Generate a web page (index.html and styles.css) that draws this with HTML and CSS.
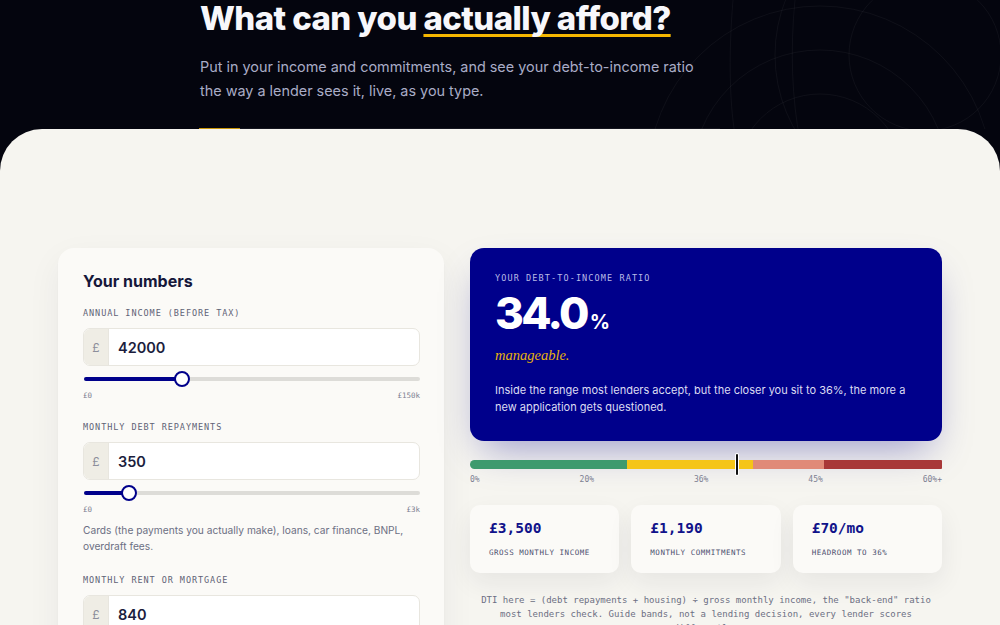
FILE: index.html
```html
<!DOCTYPE html>
<html lang="en">
<head>
<meta charset="utf-8">
<title>What can you actually afford?</title>
<link rel="stylesheet" href="styles.css">
</head>
<body>
<header class="hero">
  <svg class="hero-decor" width="1000" height="140" viewBox="0 0 1000 140" aria-hidden="true">
    <g fill="none" stroke="rgba(255,255,255,0.045)" stroke-width="1">
      <circle cx="820" cy="178" r="172"/>
      <circle cx="820" cy="178" r="128"/>
      <circle cx="820" cy="178" r="84"/>
      <circle cx="925" cy="55" r="76"/>
      <circle cx="925" cy="55" r="150"/>
      <path d="M733 0 C 728 60 730 110 736 140"/>
      <path d="M795 0 C 790 50 792 100 800 140"/>
    </g>
  </svg>
  <div class="hero-inner">
    <h1 class="hero-title">What can you <span class="hero-underline">actually afford?</span></h1>
    <p class="hero-lede">Put in your income and commitments, and see your debt-to-income ratio the way a lender sees it, live, as you type.</p>
    <div class="hero-rule"><span class="hero-rule-accent"></span></div>
  </div>
</header>

<main class="sheet">
  <div class="calc">
    <section class="inputs-card">
      <h2 class="card-title">Your numbers</h2>

      <div class="field">
        <label class="field-label" for="income">ANNUAL INCOME (BEFORE TAX)</label>
        <div class="field-input">
          <span class="field-prefix">£</span>
          <input id="income" class="field-value" type="text" value="42000">
        </div>
        <div class="slider" style="--p:0.28">
          <div class="slider-fill"></div>
          <div class="slider-thumb"></div>
        </div>
        <div class="slider-range"><span>£0</span><span>£150k</span></div>
      </div>

      <div class="field">
        <label class="field-label" for="debt">MONTHLY DEBT REPAYMENTS</label>
        <div class="field-input">
          <span class="field-prefix">£</span>
          <input id="debt" class="field-value" type="text" value="350">
        </div>
        <div class="slider" style="--p:0.1167">
          <div class="slider-fill"></div>
          <div class="slider-thumb"></div>
        </div>
        <div class="slider-range"><span>£0</span><span>£3k</span></div>
        <p class="field-help">Cards (the payments you actually make), loans, car finance, BNPL, overdraft fees.</p>
      </div>

      <div class="field">
        <label class="field-label" for="rent">MONTHLY RENT OR MORTGAGE</label>
        <div class="field-input">
          <span class="field-prefix">£</span>
          <input id="rent" class="field-value" type="text" value="840">
        </div>
      </div>
    </section>

    <section class="results">
      <div class="dti-card">
        <div class="dti-label">YOUR DEBT-TO-INCOME RATIO</div>
        <div class="dti-value">34.0<span class="dti-pct">%</span></div>
        <div class="dti-verdict">manageable.</div>
        <p class="dti-text">Inside the range most lenders accept, but the closer you sit to 36%, the more a new application gets questioned.</p>
      </div>

      <div class="gauge">
        <div class="gauge-bar">
          <span class="band band-green"></span>
          <span class="band band-yellow"></span>
          <span class="band band-salmon"></span>
          <span class="band band-red"></span>
        </div>
        <span class="gauge-marker" style="left:56.67%"></span>
      </div>
      <div class="gauge-scale"><span>0%</span><span>20%</span><span>36%</span><span>45%</span><span>60%+</span></div>

      <div class="stats">
        <div class="stat">
          <div class="stat-value">£3,500</div>
          <div class="stat-label">GROSS MONTHLY INCOME</div>
        </div>
        <div class="stat">
          <div class="stat-value">£1,190</div>
          <div class="stat-label">MONTHLY COMMITMENTS</div>
        </div>
        <div class="stat">
          <div class="stat-value">£70/mo</div>
          <div class="stat-label">HEADROOM TO 36%</div>
        </div>
      </div>

      <p class="footnote">DTI here = (debt repayments + housing) ÷ gross monthly income, the "back-end" ratio most lenders check. Guide bands, not a lending decision, every lender scores differently.</p>
    </section>
  </div>
</main>
</body>
</html>
```

FILE: styles.css
```css
* { box-sizing: border-box; }

html, body {
  margin: 0;
  padding: 0;
}

body {
  background: #04050e;
  font-family: Inter, "Noto Sans", sans-serif;
  color: #1b1d3d;
  overflow: hidden;
}

/* ---------- hero ---------- */
.hero {
  position: relative;
  height: 129px;
  overflow: hidden;
}

.hero-decor {
  position: absolute;
  left: 0;
  top: 0;
}

.hero-inner {
  position: relative;
  width: 602px;
  margin: 0 auto;
  padding-left: 1px;
}

.hero-title {
  margin: 0;
  font-size: 33px;
  line-height: 36px;
  font-weight: 800;
  letter-spacing: -0.018em;
  color: #f7f7fb;
}

.hero-underline {
  text-decoration: underline;
  text-decoration-color: #f5b700;
  text-decoration-thickness: 3px;
  text-underline-offset: 4px;
  text-decoration-skip-ink: none;
}

.hero-lede {
  margin: 19px 0 0;
  font-size: 14.4px;
  line-height: 24px;
  color: #a9acc6;
  width: 510px;
}

.hero-rule {
  margin-top: 25px;
  height: 2px;
  width: 520px;
  border-top: 1px solid rgba(255, 255, 255, 0.07);
  position: relative;
}

.hero-rule-accent {
  position: absolute;
  left: -1px;
  top: -1px;
  width: 41px;
  height: 2px;
  background: #c9960a;
}

/* ---------- sheet ---------- */
.sheet {
  background: #f6f5f0;
  border-radius: 42px 42px 0 0;
  padding-top: 119px;
  min-height: 496px;
}

.calc {
  width: 884px;
  margin: 0 auto;
  display: grid;
  grid-template-columns: 386px 472px;
  column-gap: 26px;
  align-items: start;
}

/* ---------- inputs card ---------- */
.inputs-card {
  background: #fbfaf7;
  border-radius: 16px;
  padding: 23px 24px 24px 25px;
  box-shadow: 0 12px 34px rgba(30, 30, 60, 0.06), 0 1px 2px rgba(30, 30, 60, 0.03);
}

.card-title {
  margin: 0;
  font-size: 16px;
  line-height: 20px;
  font-weight: 700;
  color: #15173a;
}

.field {
  margin-top: 20px;
}

.card-title + .field {
  margin-top: 16px;
}

.field-label {
  display: block;
  font-family: "DejaVu Sans Mono", "Liberation Mono", monospace;
  font-size: 8.5px;
  line-height: 12px;
  letter-spacing: 0.11em;
  color: #5f6276;
}

.field-input {
  margin-top: 9px;
  height: 38px;
  display: flex;
  background: #ffffff;
  border: 1px solid #e8e6df;
  border-radius: 7px;
  overflow: hidden;
}

.field-prefix {
  width: 25px;
  flex: none;
  display: flex;
  align-items: center;
  justify-content: center;
  background: #efede5;
  border-right: 1px solid #e8e6df;
  color: #8c8e9b;
  font-size: 12px;
}

.field-value {
  flex: 1;
  min-width: 0;
  border: none;
  outline: none;
  background: transparent;
  padding: 0 0 0 9px;
  font-family: Inter, "Noto Sans", sans-serif;
  font-size: 14.5px;
  font-weight: 600;
  color: #1b1d3d;
}

.slider {
  position: relative;
  margin-top: 5px;
  height: 16px;
}

.slider::before {
  content: "";
  position: absolute;
  left: 1px;
  right: 0;
  top: 6px;
  height: 4px;
  border-radius: 2px;
  background: #dddcd8;
}

.slider-fill {
  position: absolute;
  left: 1px;
  top: 6px;
  height: 4px;
  border-radius: 2px;
  background: #00008b;
  width: calc(8px + var(--p) * (100% - 16px));
}

.slider-thumb {
  position: absolute;
  top: 0;
  left: calc(var(--p) * (100% - 16px) + 1px);
  width: 16px;
  height: 16px;
  border-radius: 50%;
  background: #ffffff;
  border: 2px solid #00008b;
}

.slider-range {
  margin-top: 4px;
  display: flex;
  justify-content: space-between;
  font-family: "DejaVu Sans Mono", "Liberation Mono", monospace;
  font-size: 7.5px;
  line-height: 10px;
  color: #7d8092;
}

.field-help {
  margin: 7px 0 0;
  font-size: 10.2px;
  line-height: 16px;
  color: #6c6f83;
}

/* ---------- results ---------- */
.dti-card {
  background: #00008b;
  border-radius: 14px;
  padding: 25px 25px 25px 25px;
  color: #ffffff;
  box-shadow: 0 18px 40px -12px rgba(0, 0, 139, 0.38);
}

.dti-label {
  font-family: "DejaVu Sans Mono", "Liberation Mono", monospace;
  font-size: 8.5px;
  line-height: 10px;
  letter-spacing: 0.13em;
  color: #b9bbe6;
}

.dti-value {
  margin-top: 8px;
  font-size: 44px;
  line-height: 44px;
  font-weight: 800;
  letter-spacing: -0.06em;
  color: #ffffff;
}

.dti-pct {
  font-size: 20px;
  line-height: 0;
  font-weight: 700;
  letter-spacing: 0;
  margin-left: 3px;
}

.dti-verdict {
  margin-top: 10px;
  font-family: "Liberation Serif", "DejaVu Serif", serif;
  font-style: italic;
  font-size: 14.5px;
  line-height: 20px;
  color: #e8b20b;
}

.dti-text {
  margin: 17px 0 0;
  font-size: 11px;
  line-height: 17px;
  color: #dcdcf2;
}

.gauge {
  position: relative;
  margin-top: 19px;
  height: 9px;
}

.gauge-bar {
  display: flex;
  height: 9px;
  border-radius: 5px 1px 1px 5px;
  overflow: hidden;
}

.band { display: block; height: 100%; }
.band-green  { width: 33.33%; background: #3d9a6e; }
.band-yellow { width: 26.67%; background: #f5c518; }
.band-salmon { width: 15%;    background: #e08a78; }
.band-red    { flex: 1;       background: #a83838; }

.gauge-marker {
  position: absolute;
  top: -6px;
  width: 2px;
  height: 21px;
  margin-left: -1px;
  background: #111111;
  box-shadow: 0 0 0 1px #ffffff;
  border-radius: 1px;
}

.gauge-scale {
  margin-top: 6px;
  display: flex;
  justify-content: space-between;
  font-family: "DejaVu Sans Mono", "Liberation Mono", monospace;
  font-size: 8px;
  line-height: 10px;
  color: #7d8092;
}

.stats {
  margin-top: 20px;
  display: grid;
  grid-template-columns: repeat(3, 1fr);
  column-gap: 12px;
}

.stat {
  background: #fbfaf7;
  border-radius: 10px;
  padding: 14px 12px 15px 19px;
  box-shadow: 0 10px 26px rgba(30, 30, 60, 0.07);
}

.stat-value {
  font-family: "DejaVu Sans Mono", "Liberation Mono", monospace;
  font-size: 14.5px;
  line-height: 18px;
  font-weight: 700;
  color: #10128a;
}

.stat-label {
  margin-top: 11px;
  font-family: "DejaVu Sans Mono", "Liberation Mono", monospace;
  font-size: 7.5px;
  line-height: 10px;
  letter-spacing: 0.07em;
  color: #4e5170;
}

.footnote {
  margin: 20px 0 0;
  padding: 0 8px;
  text-align: center;
  font-family: "DejaVu Sans Mono", "Liberation Mono", monospace;
  font-size: 9px;
  line-height: 14px;
  color: #6c6f83;
}
```
